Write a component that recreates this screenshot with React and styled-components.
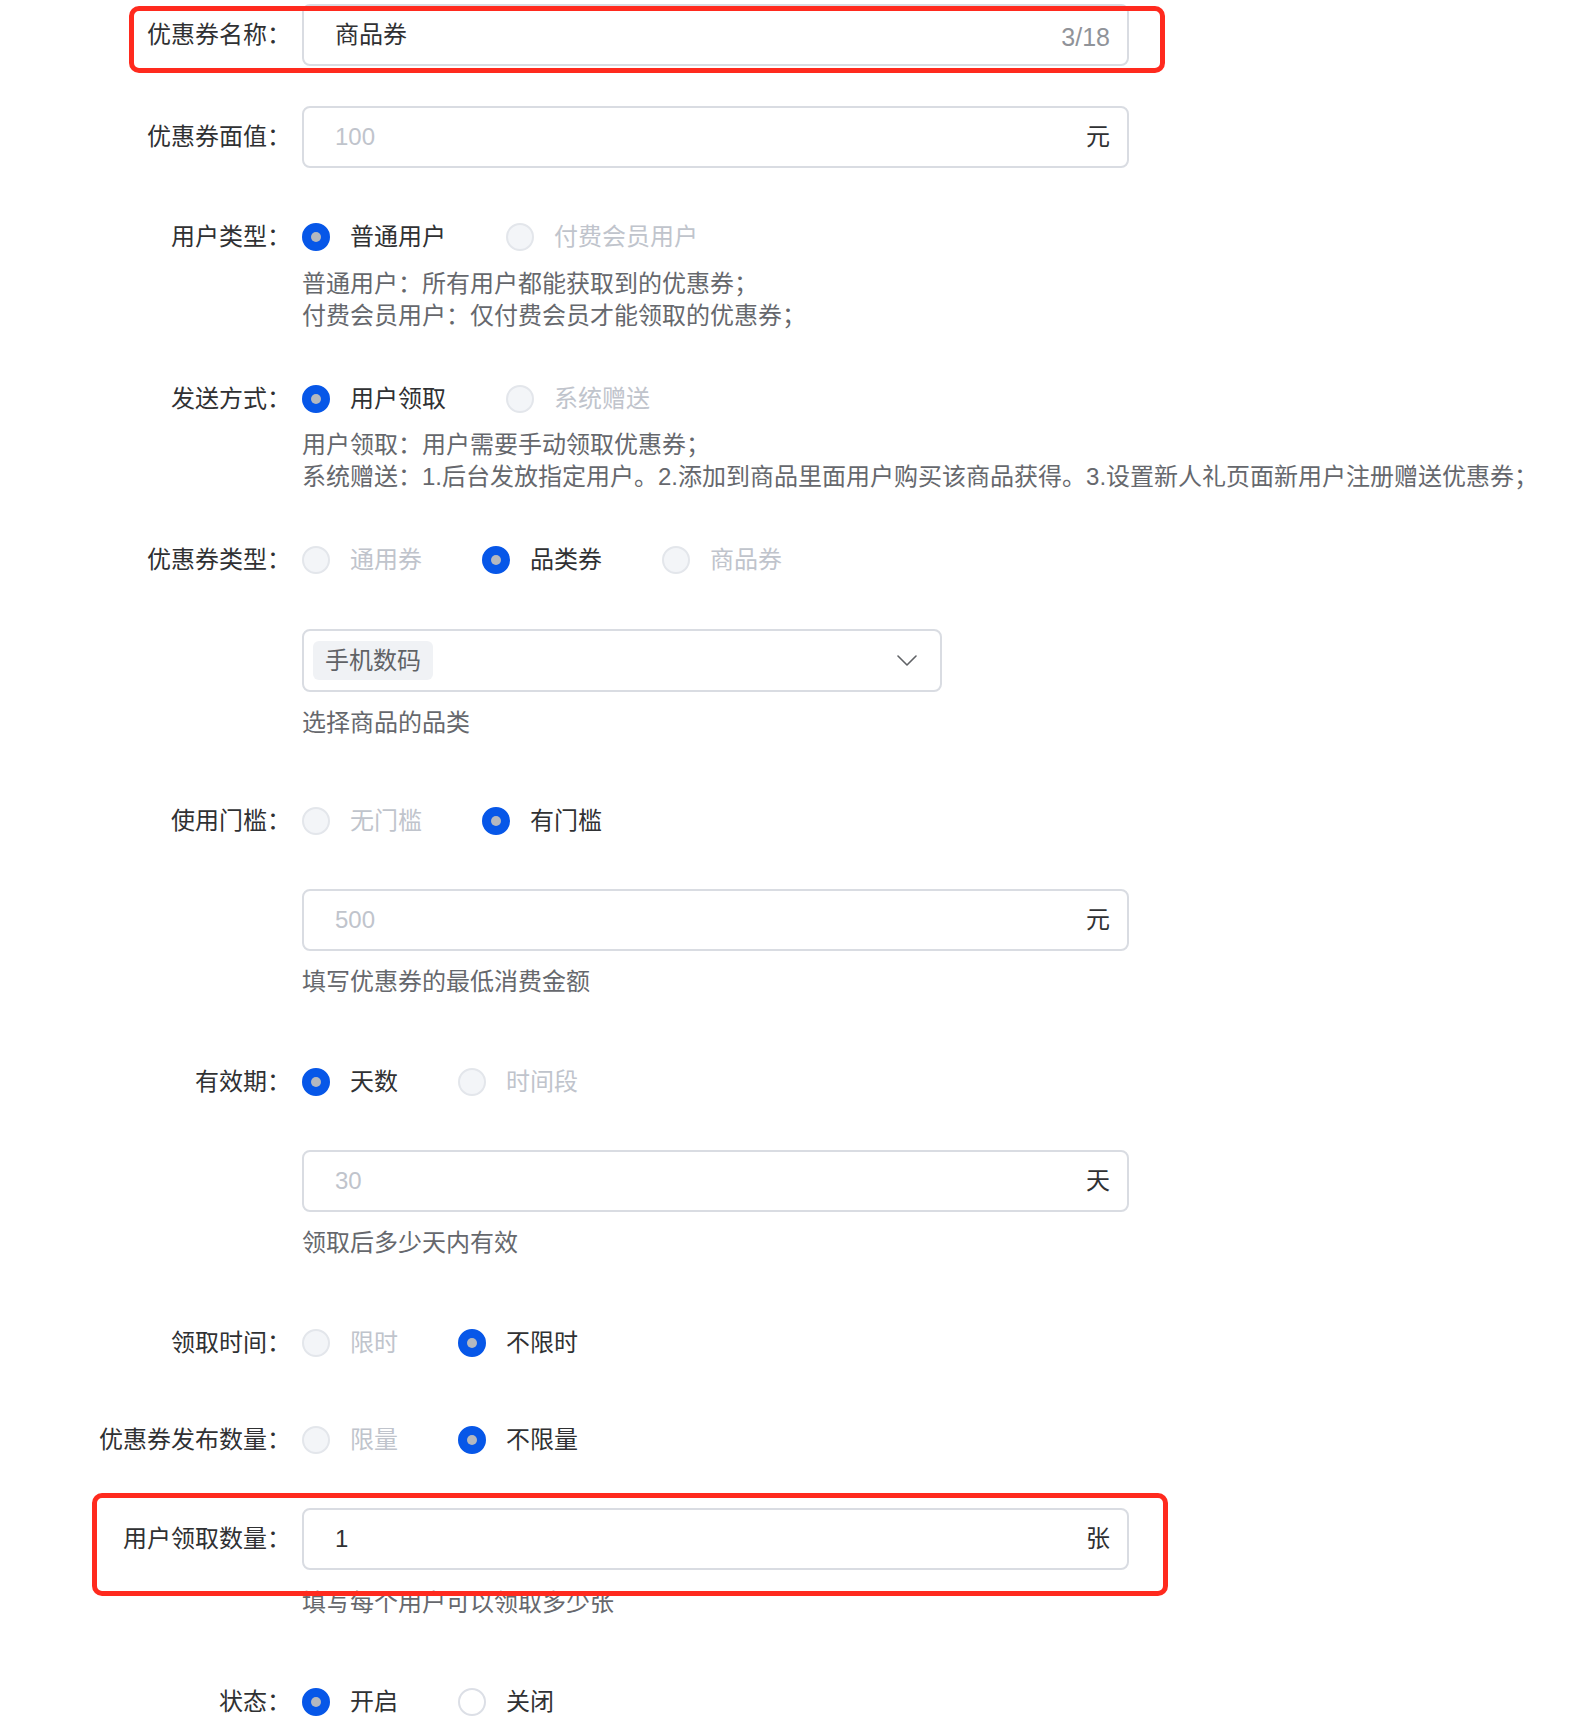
import React from 'react';
import styled, { createGlobalStyle } from 'styled-components';

const GlobalStyle = createGlobalStyle`
  html, body {
    margin: 0;
    padding: 0;
    background: #fff;
  }
  body {
    font-family: "Liberation Sans", "Noto Sans CJK SC", sans-serif;
    color: #303133;
  }
`;

const Form = styled.div`
  width: 1570px;
  padding-top: 4px;
`;

const Item = styled.div`
  position: relative;
  display: flex;
  align-items: flex-start;
  margin-bottom: ${p => (p.$gap ?? 40)}px;
`;

const Label = styled.div`
  flex: 0 0 291px;
  text-align: right;
  font-size: 24px;
  line-height: ${p => p.$h}px;
  color: #303133;
  white-space: nowrap;
`;

const Content = styled.div`
  margin-left: 11px;
  display: flex;
  flex-direction: column;
`;

const InputBox = styled.div`
  box-sizing: border-box;
  width: ${p => p.$w || 827}px;
  height: ${p => p.$h || 62}px;
  margin-top: ${p => p.$mt || 0}px;
  border: 2px solid #d9dce2;
  border-radius: 8px;
  display: flex;
  align-items: center;
  padding: 0 17px 0 31px;
  background: #fff;
`;

const Field = styled.input`
  flex: 1;
  min-width: 0;
  height: 28px;
  border: none;
  outline: none;
  background: transparent;
  padding: 0;
  font-family: inherit;
  font-size: 24px;
  line-height: 28px;
  color: #303133;
  &::placeholder {
    color: #c0c4cc;
  }
`;

const Suffix = styled.span`
  font-size: ${p => (p.$muted ? 25 : 24)}px;
  line-height: 24px;
  margin-top: ${p => (p.$muted ? 4 : 0)}px;
  color: ${p => (p.$muted ? '#909399' : '#303133')};
`;

const SelectBox = styled(InputBox)`
  justify-content: space-between;
  padding: 0 23px 0 9px;
`;

const Tag = styled.span`
  height: 39px;
  line-height: 39px;
  padding: 0 12px;
  border-radius: 6px;
  background: #f0f2f5;
  color: #606266;
  font-size: 24px;
`;

const RadioRow = styled.div`
  display: flex;
  align-items: center;
  height: 58px;
`;

const Option = styled.label`
  display: flex;
  align-items: center;
  margin-right: 60px;
  font-size: 24px;
  line-height: 24px;
  color: ${p => (p.$disabled ? '#c0c4cc' : '#303133')};
`;

const Dot = styled.span`
  box-sizing: border-box;
  width: 28px;
  height: 28px;
  margin-right: 20px;
  border-radius: 50%;
  display: flex;
  align-items: center;
  justify-content: center;
  background: ${p => (p.$checked ? '#0757e8' : p.$disabled ? '#f3f5f8' : '#fff')};
  border: 2px solid ${p => (p.$checked ? '#0757e8' : p.$disabled ? '#e3e6eb' : '#dcdfe6')};

  &::after {
    content: '';
    display: ${p => (p.$checked ? 'block' : 'none')};
    width: 10px;
    height: 10px;
    border-radius: 50%;
    background: #b4b8bf;
  }
`;

const Note = styled.div`
  margin-top: ${p => p.$mt || 0}px;
  font-size: 24px;
  line-height: 32px;
  color: #66686d;
  white-space: nowrap;
`;

const Mark = styled.div`
  position: absolute;
  z-index: 2;
  box-sizing: border-box;
  top: ${p => p.$top}px;
  left: ${p => p.$left}px;
  width: ${p => p.$w}px;
  height: ${p => p.$h}px;
  border: 5px solid #ff2a1e;
  border-radius: 10px;
  pointer-events: none;
`;

const Chevron = () => (
  <svg width="20" height="11" viewBox="0 0 20 11" fill="none">
    <polyline points="1,1 10,10 19,1" stroke="#606266" strokeWidth="1.6" strokeLinejoin="round" strokeLinecap="round" />
  </svg>
);

const Radio = ({ checked, disabled, children }) => (
  <Option $disabled={disabled}>
    <Dot $checked={checked} $disabled={disabled} />
    {children}
  </Option>
);

export default function App() {
  return (
    <>
      <GlobalStyle />
      <Form>
        <Item>
          <Label $h={62}>优惠券名称：</Label>
          <Content>
            <InputBox>
              <Field readOnly value="商品券" />
              <Suffix $muted>3/18</Suffix>
            </InputBox>
          </Content>
          <Mark $top={2} $left={129} $w={1036} $h={67} />
        </Item>

        <Item>
          <Label $h={62}>优惠券面值：</Label>
          <Content>
            <InputBox>
              <Field readOnly placeholder="100" />
              <Suffix>元</Suffix>
            </InputBox>
          </Content>
        </Item>

        <Item $gap={38}>
          <Label $h={58}>用户类型：</Label>
          <Content>
            <RadioRow>
              <Radio checked>普通用户</Radio>
              <Radio disabled>付费会员用户</Radio>
            </RadioRow>
            <Note $mt={2}>
              普通用户：所有用户都能获取到的优惠券；
              <br />
              付费会员用户：仅付费会员才能领取的优惠券；
            </Note>
          </Content>
        </Item>

        <Item $gap={38}>
          <Label $h={58}>发送方式：</Label>
          <Content>
            <RadioRow>
              <Radio checked>用户领取</Radio>
              <Radio disabled>系统赠送</Radio>
            </RadioRow>
            <Note $mt={1}>
              用户领取：用户需要手动领取优惠券；
              <br />
              系统赠送：1.后台发放指定用户。2.添加到商品里面用户购买该商品获得。3.设置新人礼页面新用户注册赠送优惠券；
            </Note>
          </Content>
        </Item>

        <Item $gap={53}>
          <Label $h={58}>优惠券类型：</Label>
          <Content>
            <RadioRow>
              <Radio disabled>通用券</Radio>
              <Radio checked>品类券</Radio>
              <Radio disabled>商品券</Radio>
            </RadioRow>
            <SelectBox $w={640} $h={63} $mt={40}>
              <Tag>手机数码</Tag>
              <Chevron />
            </SelectBox>
            <Note $mt={15}>选择商品的品类</Note>
          </Content>
        </Item>

        <Item $gap={55}>
          <Label $h={58}>使用门槛：</Label>
          <Content>
            <RadioRow>
              <Radio disabled>无门槛</Radio>
              <Radio checked>有门槛</Radio>
            </RadioRow>
            <InputBox $mt={39}>
              <Field readOnly placeholder="500" />
              <Suffix>元</Suffix>
            </InputBox>
            <Note $mt={15}>填写优惠券的最低消费金额</Note>
          </Content>
        </Item>

        <Item $gap={55}>
          <Label $h={58}>有效期：</Label>
          <Content>
            <RadioRow>
              <Radio checked>天数</Radio>
              <Radio disabled>时间段</Radio>
            </RadioRow>
            <InputBox $mt={39}>
              <Field readOnly placeholder="30" />
              <Suffix>天</Suffix>
            </InputBox>
            <Note $mt={15}>领取后多少天内有效</Note>
          </Content>
        </Item>

        <Item $gap={39}>
          <Label $h={58}>领取时间：</Label>
          <Content>
            <RadioRow>
              <Radio disabled>限时</Radio>
              <Radio checked>不限时</Radio>
            </RadioRow>
          </Content>
        </Item>

        <Item $gap={39}>
          <Label $h={58}>优惠券发布数量：</Label>
          <Content>
            <RadioRow>
              <Radio disabled>限量</Radio>
              <Radio checked>不限量</Radio>
            </RadioRow>
          </Content>
        </Item>

        <Item $gap={54}>
          <Label $h={62}>用户领取数量：</Label>
          <Content>
            <InputBox>
              <Field readOnly value="1" />
              <Suffix>张</Suffix>
            </InputBox>
            <Note $mt={17}>填写每个用户可以领取多少张</Note>
          </Content>
          <Mark $top={-15} $left={92} $w={1076} $h={103} />
        </Item>

        <Item>
          <Label $h={58}>状态：</Label>
          <Content>
            <RadioRow>
              <Radio checked>开启</Radio>
              <Radio>关闭</Radio>
            </RadioRow>
          </Content>
        </Item>
      </Form>
    </>
  );
}
